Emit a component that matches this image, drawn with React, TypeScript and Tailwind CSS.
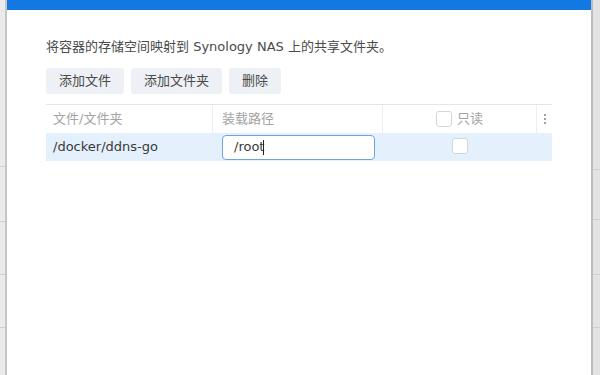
import React from 'react';

const font = { fontFamily: '"DejaVu Sans", "Noto Sans CJK SC", sans-serif' };

const SideLines: React.FC<{ rows: number[] }> = ({ rows }) => (
  <div className="flex flex-col h-full">
    {rows.map((h, i) => (
      <div key={i} className="border-b border-[#cfcfcf]" style={{ height: h }} />
    ))}
  </div>
);

const Checkbox: React.FC = () => (
  <span className="inline-block w-4 h-4 rounded-[3px] border border-[#d3d7dd] bg-white" />
);

const Kebab = () => (
  <svg width="4" height="12" viewBox="0 0 4 12" className="text-[#8a8a8a]">
    <circle cx="2" cy="2" r="1.1" fill="currentColor" />
    <circle cx="2" cy="6" r="1.1" fill="currentColor" />
    <circle cx="2" cy="10" r="1.1" fill="currentColor" />
  </svg>
);

export default function App() {
  return (
    <div className="flex h-[375px] w-[600px] bg-white overflow-hidden" style={font}>
      {/* left edge of the window behind */}
      <div className="w-[7px] flex">
        <div className="w-[5px] bg-[#ebebeb]">
          <SideLines rows={[167, 55, 53, 53]} />
        </div>
        <div className="w-[2px] bg-[#c6c6c6]" />
      </div>

      {/* dialog */}
      <div className="flex-1 flex flex-col">
        <div className="h-[10px] bg-[#1478e4]" />
        <div className="px-[39px] pt-[28px]">
          <p className="text-[13px] leading-[18px] text-[#4a4a4a]">
            将容器的存储空间映射到 Synology NAS 上的共享文件夹。
          </p>
          <div className="flex gap-[7px] mt-[12px]">
            <button className="h-[26px] px-[13px] rounded-[3px] bg-[#edf0f4] text-[13px] text-[#4a4a4a]">添加文件</button>
            <button className="h-[26px] px-[13px] rounded-[3px] bg-[#edf0f4] text-[13px] text-[#4a4a4a]">添加文件夹</button>
            <button className="h-[26px] px-[13px] rounded-[3px] bg-[#edf0f4] text-[13px] text-[#4a4a4a]">删除</button>
          </div>

          <div className="mt-[10px] border-t border-[#e3e5e8] w-[506px]">
            {/* header */}
            <div className="flex h-[28px] items-center text-[13px] text-[#a3a3a3]">
              <div className="w-[167px] h-full flex items-center pl-[7px] border-r border-[#eceef0]">文件/文件夹</div>
              <div className="w-[170px] h-full flex items-center pl-[9px] border-r border-[#eceef0]">装载路径</div>
              <div className="w-[154px] h-full flex items-center justify-center gap-[5px] border-r border-[#eceef0]">
                <Checkbox />
                <span>只读</span>
              </div>
              <div className="flex-1 h-full flex items-center justify-center">
                <Kebab />
              </div>
            </div>
            {/* data row */}
            <div className="flex h-[28px] items-center bg-[#e4f0fc] text-[13px] text-[#3a3a3a]">
              <div className="w-[167px] pl-[7px]">/docker/ddns-go</div>
              <div className="w-[170px] pl-[9px]">
                <div className="w-[153px] h-[25px] rounded-[4px] border border-[#6ea5dc] bg-white flex items-center pl-[11px]">
                  <span>/root</span>
                  <span className="w-px h-[15px] bg-[#222] -ml-px" />
                </div>
              </div>
              <div className="w-[154px] flex justify-center -mt-[2px]">
                <Checkbox />
              </div>
              <div className="flex-1" />
            </div>
          </div>
        </div>
      </div>

      {/* right edge */}
      <div className="w-[9px] flex">
        <div className="w-[2px] bg-[#bdbdbd]" />
        <div className="flex-1 bg-[#e3e3e3]">
          <SideLines rows={[170, 50, 55, 53]} />
        </div>
      </div>
    </div>
  );
}
